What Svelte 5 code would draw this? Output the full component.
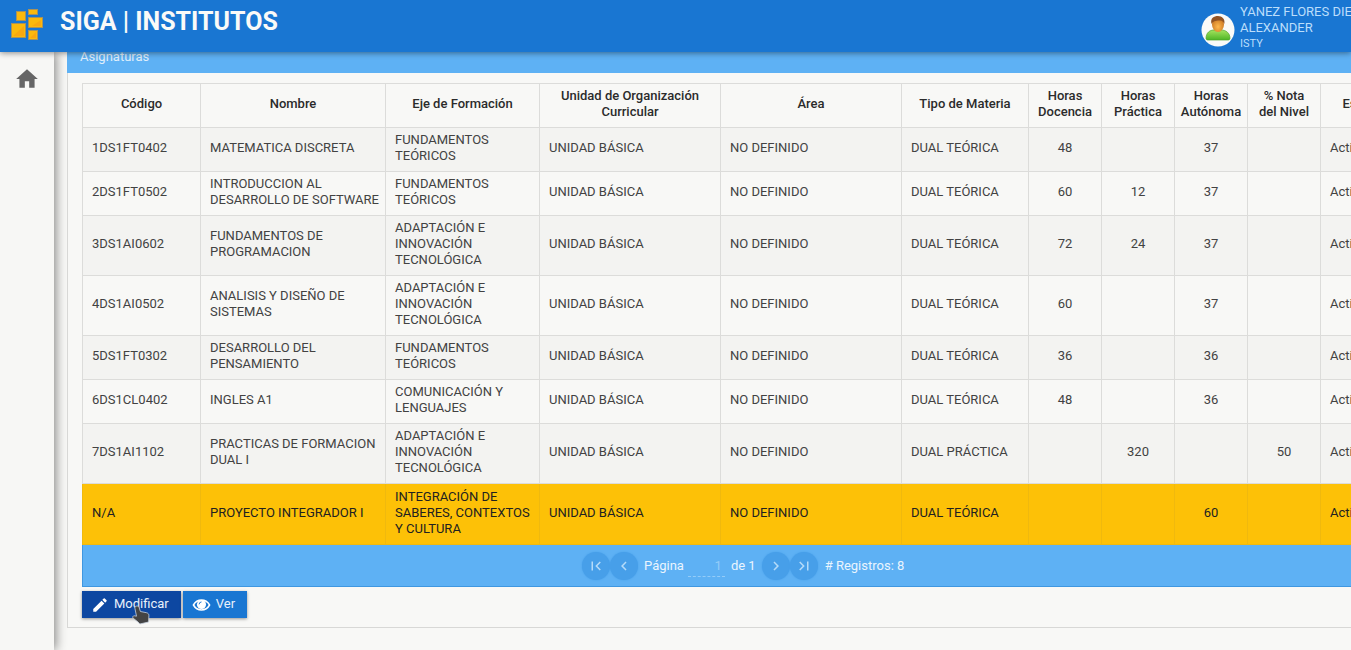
<script>
  const columns = [
    { label: 'Código', width: 118 },
    { label: 'Nombre', width: 185 },
    { label: 'Eje de Formación', width: 154 },
    { label: 'Unidad de Organización Curricular', width: 181 },
    { label: 'Área', width: 181 },
    { label: 'Tipo de Materia', width: 127 },
    { label: 'Horas Docencia', width: 73 },
    { label: 'Horas Práctica', width: 73 },
    { label: 'Horas Autónoma', width: 73 },
    { label: '% Nota del\u00a0Nivel', width: 73 },
    { label: 'Estado', width: 84 }
  ];
  const rows = [
    ['1DS1FT0402', 'MATEMATICA DISCRETA', 'FUNDAMENTOS TEÓRICOS', 'DUAL TEÓRICA', '48', '', '37', ''],
    ['2DS1FT0502', 'INTRODUCCION AL DESARROLLO DE SOFTWARE', 'FUNDAMENTOS TEÓRICOS', 'DUAL TEÓRICA', '60', '12', '37', ''],
    ['3DS1AI0602', 'FUNDAMENTOS DE PROGRAMACION', 'ADAPTACIÓN E INNOVACIÓN TECNOLÓGICA', 'DUAL TEÓRICA', '72', '24', '37', ''],
    ['4DS1AI0502', 'ANALISIS Y DISEÑO DE SISTEMAS', 'ADAPTACIÓN E INNOVACIÓN TECNOLÓGICA', 'DUAL TEÓRICA', '60', '', '37', ''],
    ['5DS1FT0302', 'DESARROLLO DEL PENSAMIENTO', 'FUNDAMENTOS TEÓRICOS', 'DUAL TEÓRICA', '36', '', '36', ''],
    ['6DS1CL0402', 'INGLES A1', 'COMUNICACIÓN Y LENGUAJES', 'DUAL TEÓRICA', '48', '', '36', ''],
    ['7DS1AI1102', 'PRACTICAS DE FORMACION DUAL I', 'ADAPTACIÓN E INNOVACIÓN TECNOLÓGICA', 'DUAL PRÁCTICA', '', '320', '', '50'],
    ['N/A', 'PROYECTO INTEGRADOR I', 'INTEGRACIÓN DE SABERES, CONTEXTOS Y CULTURA', 'DUAL TEÓRICA', '', '', '60', '']
  ];
  let selected = $state(7);
  let page = $state('1');
</script>

<div class="app">
  <header>
    <svg class="logo" viewBox="0 0 34 34" aria-hidden="true">
      <g fill="#fbb90c" stroke="#a8925a" stroke-width="1">
        <rect x="6.5" y="3.5" width="9" height="9" />
        <rect x="18.500" y="1.500" width="9" height="5" />
        <rect x="18.500" y="9.500" width="14" height="10" />
        <rect x="1.500" y="15.500" width="14" height="14" />
        <rect x="18.500" y="22.500" width="9" height="9" />
      </g>
      <path d="M3 28 14 18V28ZM20 30l6-6v6zM22 18l9-6v6z" fill="#f79a12" opacity=".55" />
    </svg>
    <h1>SIGA | INSTITUTOS</h1>
    <div class="user">
      <svg class="avatar" viewBox="0 0 34 34" aria-hidden="true">
        <defs>
          <linearGradient id="shirt" x1="0" y1="0" x2="0" y2="1">
            <stop offset="0" stop-color="#a5e35f" /><stop offset="1" stop-color="#4db526" />
          </linearGradient>
          <radialGradient id="face" cx=".5" cy=".65" r=".6">
            <stop offset="0" stop-color="#ffb84d" /><stop offset="1" stop-color="#c9741f" />
          </radialGradient>
        </defs>
        <circle cx="17" cy="17" r="16.500" fill="#fafaf8" />
        <path d="M5 25.500c0-6 4-8.500 8-8.500h7c5 0 9 3 9 8.500 0 1-1 1.500-2 1.500H7c-1 0-2-.5-2-1.500Z" fill="url(#shirt)" stroke="#4da52c" stroke-width=".7" />
        <ellipse cx="17" cy="11.500" rx="6" ry="7.500" fill="url(#face)" />
        <path d="M10.500 11C9 5 13 3 17 3s7.500 3 6.300 8c-1-2-2-3.500-4-3.500-3 0-7 0-8.800 3.500Z" fill="#925323" />
      </svg>
      <div class="who">
        <span>YANEZ FLORES DIEGO</span>
        <span>ALEXANDER</span>
        <small>ISTY</small>
      </div>
    </div>
  </header>

  <div class="body">
    <nav>
      <a href="#inicio" aria-label="Inicio">
        <svg viewBox="0 0 24 24" width="26" height="26"><path d="M10 20v-6h4v6h5v-8h3L12 3 2 12h3v8z" fill="#666" /></svg>
      </a>
    </nav>
    <main>
      <section class="panel">
        <h2>Asignaturas</h2>
        <div class="content">
          <table>
            <colgroup>
              {#each columns as c}<col style="width: {c.width}px" />{/each}
            </colgroup>
            <thead>
              <tr>{#each columns as c}<th scope="col">{c.label}</th>{/each}</tr>
            </thead>
            <tbody>
              {#each rows as r, i}
                <tr class:selected={selected === i} onclick={() => (selected = i)}>
                  <td>{r[0]}</td>
                  <td>{r[1]}</td>
                  <td>{r[2]}</td>
                  <td>UNIDAD BÁSICA</td>
                  <td>NO DEFINIDO</td>
                  <td>{r[3]}</td>
                  {#each r.slice(4) as n}<td class="num">{n}</td>{/each}
                  <td>Activo</td>
                </tr>
              {/each}
            </tbody>
          </table>
          <div class="pager">
            <button class="round" disabled aria-label="Primera página">
              <svg viewBox="0 0 24 24"><path d="M18.410 16.590 13.820 12l4.590-4.590L17 6l-6 6 6 6zM6 6h2v12H6z" /></svg>
            </button>
            <button class="round" disabled aria-label="Página anterior">
              <svg viewBox="0 0 24 24"><path d="M15.410 7.410 14 6l-6 6 6 6 1.410-1.410L10.830 12z" /></svg>
            </button>
            <label for="page">Página</label>
            <input id="page" type="text" bind:value={page} disabled />
            <span class="of">de 1</span>
            <button class="round" disabled aria-label="Página siguiente">
              <svg viewBox="0 0 24 24"><path d="M10 6 8.590 7.410 13.170 12l-4.580 4.590L10 18l6-6z" /></svg>
            </button>
            <button class="round" disabled aria-label="Última página">
              <svg viewBox="0 0 24 24"><path d="M5.590 7.410 10.180 12l-4.590 4.590L7 18l6-6-6-6zM16 6h2v12h-2z" /></svg>
            </button>
            <span class="count"># Registros: 8</span>
          </div>
          <div class="actions">
            <button class="action edit">
              <svg viewBox="0 0 24 24" width="18" height="18"><path d="M3 17.250V21h3.750L17.810 9.940l-3.750-3.750zM20.710 7.040a1 1 0 0 0 0-1.410l-2.340-2.340a1 1 0 0 0-1.410 0l-1.830 1.830 3.750 3.750z" fill="#fff" /></svg>
              <span>Modificar</span>
              <svg class="pointer" viewBox="0 0 18 20" aria-hidden="true">
                <path d="M5 1c1.200 0 1.900.7 2.200 1.700L8.400 6.500l6 1.200c1.700.3 2.600 1.500 2.500 3L16.600 17l-8.800 2L6 17 1.300 13.300c-1.200-1-.4-2.800 1.300-2.500l1.900.4L2.900 3.200C2.700 1.900 3.800 1 5 1Z" fill="#444" stroke="#c9d3df" stroke-width=".8" />
              </svg>
            </button>
            <button class="action">
              <svg viewBox="0 0 20 16" width="19" height="16">
                <path d="M1.500 8C5.500 1 14.500 1 18.500 8c-4 7-13 7-17 0Z" fill="none" stroke="#fff" stroke-width="1.600" />
                <circle cx="10" cy="7.500" r="4.800" fill="#fff" />
                <path d="M7.500 7.300A2.600 2.600 0 0 1 10 4.800" fill="none" stroke="#1976d2" stroke-width="1" />
              </svg>
              <span>Ver</span>
            </button>
          </div>
        </div>
      </section>
    </main>
  </div>
</div>

<style>
  :global(body) { margin: 0; background: #f8f8f6; overflow: hidden; }
  .app {
    min-height: 100vh;
    display: flex;
    flex-direction: column;
    overflow: hidden;
    font: 13px/16px Roboto, sans-serif;
    color: #424242;
  }
  header {
    height: 52px;
    display: flex;
    align-items: flex-start;
    background: #1976d2;
    box-shadow: 0 1px 6px rgba(0, 0, 0, .45);
    position: relative;
    z-index: 2;
    color: #fff;
  }
  .logo { width: 34px; height: 34px; margin: 8px 0 0 10px; }
  h1 { margin: 7px 0 0 16px; font-size: 25px; line-height: 30px; font-weight: 700; color: #fafaf8; white-space: nowrap; }
  .user { margin-left: auto; display: flex; gap: 5px; width: 150px; flex: none; color: #bbdefb; }
  .avatar { width: 34px; height: 34px; margin-top: 13px; flex: none; }
  .who { display: flex; flex-direction: column; padding-top: 4px; white-space: nowrap; }
  .who small { font-size: 11px; }
  .body { flex: 1; display: flex; }
  nav {
    flex: none;
    width: 54px;
    box-sizing: border-box;
    padding: 14px 0 0 14px;
    background: #f7f7f5;
    box-shadow: 2px 0 10px rgba(0, 0, 0, .45);
  }
  nav a { display: block; height: 26px; }
  main { flex: 1; min-width: 0; padding-left: 13px; }
  .panel { width: max-content; border: 1px solid #d8d8d6; border-top: 0; background: #f8f8f6; position: relative; }
  h2 {
    margin: 0 0 0 -1px;
    height: 21px;
    box-sizing: border-box;
    padding-left: 13px;
    font-size: 13px;
    line-height: 10px;
    font-weight: 400;
    color: #e0effb;
    background: #5eb1f4;
  }
  .content { padding: 10px 14px 9px; }
  table { border-collapse: collapse; table-layout: fixed; width: 1322px; }
  th, td { border: 1px solid #dcdcda; padding: 4px 5px 7px 9px; }
  th { font-weight: 500; color: #2b2b2b; padding: 4px 5px 7px; text-align: center; }
  td { text-align: left; }
  tbody tr { height: 44px; }
  tbody tr:nth-child(odd) { background: #f3f3f1; }
  tbody tr.selected { height: 61px; background: #fdc107; color: #212121; }
  tbody tr.selected td { border-color: #f0b90e; }
  td.num { text-align: center; padding: 4px 5px 7px; }
  .pager {
    display: flex;
    align-items: center;
    height: 42px;
    box-sizing: border-box;
    padding-left: 499px;
    color: #eaf5fe;
    background: #5eb1f4;
    border: 1px solid #3f97e0;
    border-top: 0;
  }
  .round {
    width: 28px;
    height: 28px;
    padding: 5px;
    border: 0;
    border-radius: 50%;
    background: #479fe9;
    box-shadow: 0 0 2px #479fe9;
  }
  .round svg { display: block; width: 18px; height: 18px; fill: #b5dbf9; }
  .pager label { margin: 0 4px 0 6px; }
  .pager input {
    width: 37px;
    height: 22px;
    box-sizing: border-box;
    padding: 0 3px 0 0;
    border: 0;
    border-bottom: 1px dashed #94ccf8;
    background: none;
    font: inherit;
    text-align: right;
    color: #94ccf8;
  }
  .of { margin: 0 6px; }
  .count { margin-left: 7px; }
  .actions { display: flex; gap: 2px; padding-top: 4px; }
  .action {
    position: relative;
    display: flex;
    align-items: center;
    height: 27px;
    padding: 0 12px 0 9px;
    gap: 5px;
    border: 0;
    background: #1976d2;
    color: #e8f1fb;
    font: inherit;
    box-shadow: 0 1px 3px rgba(0, 0, 0, .4);
  }
  .action span { padding-bottom: 2px; }
  .edit { background: #0d47a1; }
  .pointer { position: absolute; left: 50px; top: 14px; width: 18px; height: 20px; }
</style>
